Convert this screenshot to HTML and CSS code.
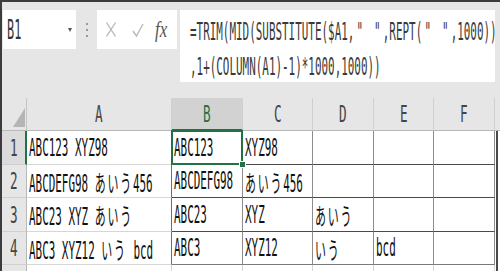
FILE: index.html
```html
<!DOCTYPE html>
<html>
    <head>
        <link rel="stylesheet" href="styles.css">
    </head>
    <body>
        <div class="app">
            <div class="bar">
                <div class="namebox">
                    <span class="t nm">B1</span>
                    <span class="caret"></span>
                </div>
                <div class="grip"><i></i><i></i><i></i></div>
                <div class="fxbox">
                    <svg class="ico-x" width="10" height="15" viewBox="0 0 10 15"><path d="M0.5 0.5 L9.5 14.5 M9.5 0.5 L0.5 14.5" stroke="#b9b9b9" stroke-width="1.3" fill="none"/></svg>
                    <svg class="ico-ok" width="12" height="14" viewBox="0 0 12 14"><path d="M1 8 L4.5 13 L11 1" stroke="#b9b9b9" stroke-width="1.4" fill="none"/></svg>
                    <span class="fx">fx</span>
                </div>
                <div class="formula">
                    <div><span class="t">=TRIM(MID(SUBSTITUTE($A1,<span class="q">"</span> <span class="q">"</span>,REPT(<span class="q">"</span> <span class="q">"</span>,1000))</span></div>
                    <div><span class="t">,1+(COLUMN(A1)-1)*1000,1000))</span></div>
                </div>
            </div>

            <div class="sheet">
                <div class="corner"><svg width="12" height="19" viewBox="0 0 12 19"><polygon points="12,0 12,19 0,19" fill="#b5b5b5"/></svg></div>
                <div class="ch"><span class="t">A</span></div>
                <div class="ch sel"><span class="t">B</span></div>
                <div class="ch"><span class="t">C</span></div>
                <div class="ch"><span class="t">D</span></div>
                <div class="ch"><span class="t">E</span></div>
                <div class="ch"><span class="t">F</span></div>
                <div class="ch end"></div>

                <div class="rh sel"><span class="t">1</span></div>
                <div class="c ca"><span class="t">ABC123 XYZ98</span></div>
                <div class="c b act"><span class="t">ABC123</span></div>
                <div class="c b"><span class="t">XYZ98</span></div>
                <div class="c b"></div>
                <div class="c b"></div>
                <div class="c b"></div>
                <div class="edge"></div>

                <div class="rh"><span class="t">2</span></div>
                <div class="c ca"><span class="t">ABCDEFG98 <span class="j">あいう</span>456</span></div>
                <div class="c b"><span class="t">ABCDEFG98</span></div>
                <div class="c b"><span class="t"><span class="j">あいう</span>456</span></div>
                <div class="c b"></div>
                <div class="c b"></div>
                <div class="c b"></div>
                <div class="edge"></div>

                <div class="rh"><span class="t">3</span></div>
                <div class="c ca"><span class="t">ABC23 XYZ <span class="j">あいう</span></span></div>
                <div class="c b"><span class="t">ABC23</span></div>
                <div class="c b"><span class="t">XYZ</span></div>
                <div class="c b"><span class="t"><span class="j">あいう</span></span></div>
                <div class="c b"></div>
                <div class="c b"></div>
                <div class="edge"></div>

                <div class="rh"><span class="t">4</span></div>
                <div class="c ca"><span class="t">ABC3 XYZ12 <span class="j">いう</span> bcd</span></div>
                <div class="c b last"><span class="t">ABC3</span></div>
                <div class="c b last"><span class="t">XYZ12</span></div>
                <div class="c b last"><span class="t"><span class="j">いう</span></span></div>
                <div class="c b last"><span class="t">bcd</span></div>
                <div class="c b last"></div>
                <div class="edge"></div>

                <div class="rh"></div>
                <div class="c"></div>
                <div class="c"></div>
                <div class="c"></div>
                <div class="c"></div>
                <div class="c"></div>
                <div class="c"></div>
                <div class="edge"></div>
            </div>
        </div>
    </body>
</html>
```

FILE: styles.css
```css
body {
    margin: 0;
    background: #fff;
    font-family: "DejaVu Sans Mono", "Noto Sans CJK JP", monospace;
    color: #111;
}
.app {
    height: 269px;
    overflow: hidden;
    border-top: 2px solid #3c3c3c;
    border-left: 2px solid #3c3c3c;
    background: #e6e6e6;
}

/* text is drawn narrow, like the squeezed screenshot */
.t {
    display: inline-block;
    white-space: nowrap;
    font-size: 24px;
    transform: scaleX(.455);
    transform-origin: 0 50%;
}
.j {
    letter-spacing: 4px;
}
.q {
    display: inline-block;
    width: 24px;
    text-align: center;
}

/* formula bar */
.bar {
    display: flex;
    align-items: flex-start;
    height: 96px;
    padding-top: 8px;
    box-sizing: border-box;
}
.namebox {
    display: flex;
    align-items: center;
    width: 73px;
    height: 39px;
    margin-left: 1px;
    padding: 0 4px;
    box-sizing: border-box;
    background: #fff;
}
.nm {
    font-size: 27px;
    color: #333;
    transform: scaleX(.44);
}
.caret {
    margin-left: auto;
    border-style: solid;
    border-width: 4px 2.5px 0 2.5px;
    border-color: #555 transparent transparent transparent;
}
.grip {
    display: flex;
    flex-direction: column;
    gap: 4px;
    margin: 13px 0 0 10px;
}
.grip i {
    width: 2px;
    height: 2px;
    background: #999;
}
.fxbox {
    display: flex;
    align-items: center;
    width: 80px;
    height: 39px;
    margin-left: 9px;
    padding-left: 9px;
    box-sizing: border-box;
    background: #fff;
}
.ico-ok {
    margin-left: 16px;
}
.fx {
    margin-left: 11px;
    font-family: "Liberation Serif", serif;
    font-style: italic;
    font-size: 24px;
    color: #555;
    display: inline-block;
    transform: scaleX(.7);
    transform-origin: 0 50%;
}
.formula {
    width: 315px;
    height: 72px;
    margin-left: 3px;
    padding: 6px 0 0 10px;
    box-sizing: border-box;
    background: #fff;
    color: #3a3a3a;
    line-height: 32px;
}

/* sheet */
.sheet {
    display: grid;
    grid-template-columns: 25px 145px 71px 70px 61px 60px 61px 1fr;
    grid-template-rows: 33px 34px 33px 34px 33px 40px;
    background: #fff;
}
.corner {
    display: flex;
    justify-content: flex-end;
    align-items: flex-end;
    padding: 0 1px 3px 0;
    background: #e6e6e6;
    border-right: 1px solid #c4c4c4;
    border-bottom: 1px solid #b8b8b8;
}
.ch, .rh {
    display: flex;
    align-items: center;
    justify-content: center;
    background: #e6e6e6;
    color: #444;
    overflow: hidden;
}
.ch .t, .rh .t {
    font-size: 23px;
    transform: scaleX(.55);
    transform-origin: 50% 50%;
}
.ch {
    border-right: 1px solid #d0d0d0;
    border-bottom: 1px solid #b8b8b8;
}
.ch.sel {
    background: #d2d2d2;
    color: #217346;
    border-bottom: 2px solid #217346;
}
.ch.end {
    border-right: none;
}
.rh {
    border-right: 1px solid #b8b8b8;
    border-bottom: 1px solid #d0d0d0;
}
.rh.sel {
    background: #dcdcdc;
    border-right: 2px solid #217346;
}
.c {
    display: flex;
    align-items: center;
    padding-left: 2px;
    overflow: hidden;
    border-right: 1px solid #d6d6d6;
    border-bottom: 1px solid #d6d6d6;
}
.ca {
    border-right-color: #6e6e6e;
}
.b {
    border-right-color: #8c8c8c;
    border-bottom-color: #4a4a4a;
}
.b.last {
    border-bottom-color: #7a7a7a;
}
.edge {
    background: linear-gradient(to right, #fff 1px, #4a4a4a 1px, #4a4a4a 3px, #fff 3px);
}

/* active cell */
.act {
    position: relative;
    overflow: visible;
}
.act::after {
    content: "";
    position: absolute;
    top: -1px;
    left: -1px;
    right: -1px;
    bottom: -1px;
    border: 2px solid #217346;
}
.act::before {
    content: "";
    position: absolute;
    right: -4px;
    bottom: -4px;
    width: 5px;
    height: 5px;
    background: #217346;
    border: 1px solid #fff;
    z-index: 1;
}
```
